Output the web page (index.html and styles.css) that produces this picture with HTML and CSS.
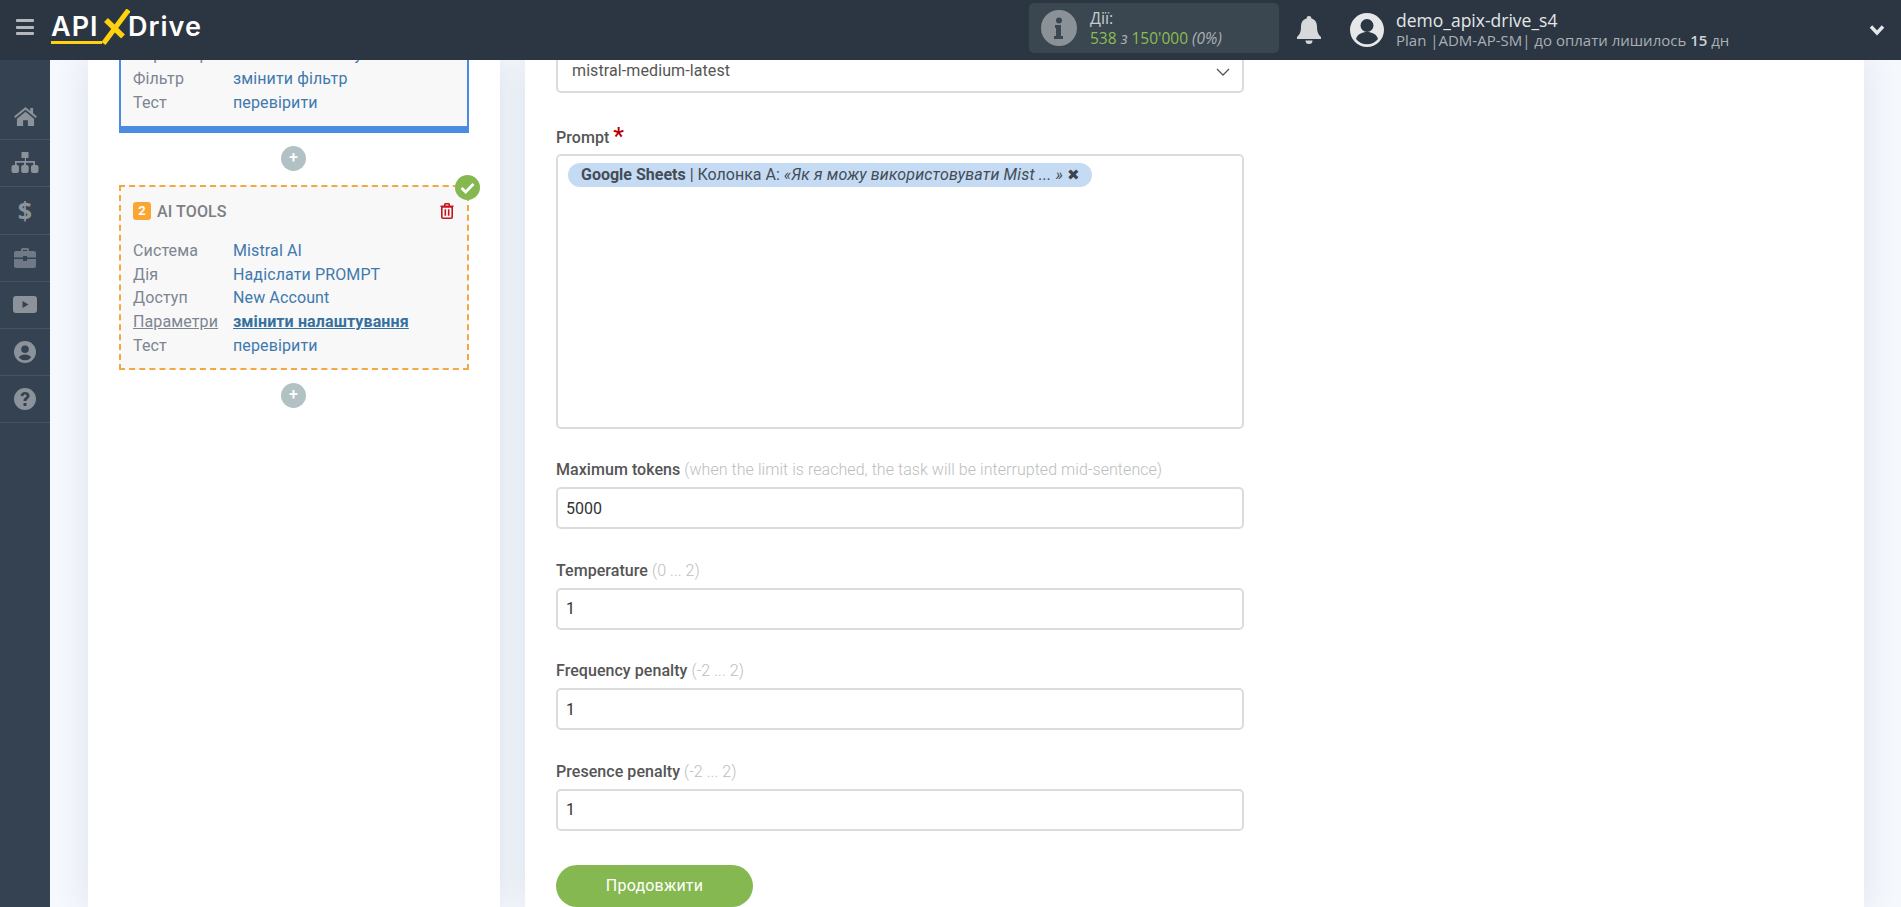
FILE: index.html
```html
<!DOCTYPE html>
<html lang="uk">
<head>
<meta charset="utf-8">
<title>ApiX-Drive</title>
<link rel="stylesheet" href="styles.css">
</head>
<body>
<header class="topbar">
  <div class="burger"><i></i><i></i><i></i></div>
  <div class="logo">
    <span class="logo-api">API</span>
    <svg class="logo-x" viewBox="0 0 28 36" width="28" height="36"><path d="M26.500 1 1.500 34.500" stroke="#ffd10f" stroke-width="5" fill="none"/><path d="M4 11 21 27.500" stroke="#ffd10f" stroke-width="5.500" fill="none"/></svg>
    <span class="logo-drive">Drive</span>
  </div>
  <div class="top-right">
    <div class="quota">
      <svg class="quota-icon" viewBox="0 0 36 36" width="36" height="36"><circle cx="18" cy="18" r="18" fill="#8b9297"/><circle cx="18" cy="10.500" r="3" fill="#3a4751"/><path d="M14 15h6v11h2v3h-9v-3h2v-8h-1z" fill="#3a4751"/></svg>
      <div class="quota-text">
        <div class="quota-title">Дії:</div>
        <div class="quota-val"><span class="green">538</span> <em>з</em> <span class="green">150'000</span> <em>(0%)</em></div>
      </div>
    </div>
    <svg class="bell" viewBox="0 0 24 28" width="24" height="28"><path d="M12 0a2.400 2.400 0 0 1 2.400 2.600C18.500 3.700 20 7 20 11c0 6 2 8 4 10v2H0v-2c2-2 4-4 4-10 0-4 1.500-7.300 5.600-8.400A2.400 2.400 0 0 1 12 0z" fill="#d6d8da"/><path d="M8.500 24.500h7a3.500 3.500 0 0 1-7 0z" fill="#d6d8da"/></svg>
    <svg class="avatar" viewBox="0 0 34 34" width="34" height="34"><circle cx="17" cy="17" r="17" fill="#e6e7e8"/><circle cx="17" cy="12.500" r="6.500" fill="#2b3643"/><path d="M6 26c1.500-5 6-7 11-7s9.500 2 11 7a14 14 0 0 1-22 0z" fill="#2b3643"/></svg>
    <div class="user">
      <div class="user-name">demo_apix-drive_s4</div>
      <div class="user-plan">Plan |ADM-AP-SM| до оплати лишилось <b>15</b> дн</div>
    </div>
    <svg class="top-chev" viewBox="0 0 16 12" width="16" height="12"><path d="M2 2.500 8 9l6-6.500" stroke="#e6e7e8" stroke-width="3.400" fill="none"/></svg>
  </div>
</header>
<div class="body">
  <nav class="sidebar">
    <a class="nav-item"><svg viewBox="0 0 26 22" width="25" height="21"><path d="M13 1 1 11l1.300 1.700L13 4l10.700 8.700L25 11l-4-3.300V2h-3v3.200z"/><path d="M13 6 4 13.300V21h6.500v-6h5v6H22v-7.700z"/></svg></a>
    <a class="nav-item"><svg viewBox="0 0 28 22" width="28" height="22"><path d="M10.500 0h7v6h-2.500v3H24v4h-1.700v-2.300H15V13h-2v-2.300H5.700V13H4V9h9.900V6h-3.400z"/><rect x="0.500" y="13" width="7.500" height="8" rx="2"/><rect x="10.200" y="13" width="7.500" height="8" rx="2"/><rect x="20" y="13" width="7.500" height="8" rx="2"/></svg></a>
    <a class="nav-item"><span class="dollar">$</span></a>
    <a class="nav-item"><svg class="dim" viewBox="0 0 22 20" width="22" height="20"><path d="M7 3V1.500A1.500 1.500 0 0 1 8.500 0h5A1.500 1.500 0 0 1 15 1.500V3h5a2 2 0 0 1 2 2v4.500H13V8H9v1.500H0V5a2 2 0 0 1 2-2zm2 0h4V2H9z"/><path d="M0 11h9v2h4v-2h9v7a2 2 0 0 1-2 2H2a2 2 0 0 1-2-2z"/></svg></a>
    <a class="nav-item"><svg viewBox="0 0 24 17" width="24" height="17"><path fill-rule="evenodd" d="M3 0h18a3 3 0 0 1 3 3v11a3 3 0 0 1-3 3H3a3 3 0 0 1-3-3V3a3 3 0 0 1 3-3zm6.500 5v7l6-3.500z"/></svg></a>
    <a class="nav-item"><svg viewBox="0 0 22 22" width="22" height="22"><path fill-rule="evenodd" d="M11 0a11 11 0 1 1 0 22 11 11 0 0 1 0-22zm0 4.500a3.800 3.800 0 1 0 0 7.600 3.800 3.800 0 0 0 0-7.600zm0 9c-2.800 0-5.200 1-6.200 3a8.200 8.200 0 0 0 12.400 0c-1-2-3.400-3-6.200-3z"/></svg></a>
    <a class="nav-item"><svg viewBox="0 0 22 22" width="22" height="22"><path fill-rule="evenodd" d="M11 0a11 11 0 1 1 0 22 11 11 0 0 1 0-22zm-1.500 15v3h3v-3zM11 4C8.500 4 6.800 5.300 6.500 7.800l2.800.4C9.500 7 10 6.500 11 6.500s1.600.5 1.600 1.300c0 .7-.5 1.100-1.300 1.700-1.200.9-1.800 1.600-1.800 3.500h3c0-1 .3-1.400 1.200-2 1.200-.9 1.900-1.800 1.900-3.300C15.600 5.400 13.700 4 11 4z"/></svg></a>
  </nav>
  <main class="main">
    <section class="panel panel-left">
      <div class="block block-blue">
        <div class="row row-clipped"><span class="key">Параметри</span><span class="val">змінити налаштування</span></div>
        <div class="row"><span class="key">Фільтр</span><span class="val">змінити фільтр</span></div>
        <div class="row"><span class="key">Тест</span><span class="val">перевірити</span></div>
      </div>
      <div class="plus">+</div>
      <div class="block block-dashed">
        <div class="check"><svg viewBox="0 0 14 11" width="15" height="12"><path d="M1.500 5.500 5.300 9.200 12.500 1.800" stroke="#fff" stroke-width="2.600" fill="none"/></svg></div>
        <div class="block-head">
          <span class="num">2</span><span class="block-title">AI TOOLS</span>
          <svg class="trash" viewBox="0 0 14 16" width="14" height="16"><path fill="none" stroke="#c8141c" stroke-width="1.600" d="M1.800 4h10.400v10a1.200 1.200 0 0 1-1.200 1.200H3A1.200 1.200 0 0 1 1.800 14zM.5 3.300h13M4.800 3V1.400A.7.700 0 0 1 5.500.8h3a.7.700 0 0 1 .7.600V3M5.300 6.200v6.500M8.700 6.200v6.500"/></svg>
        </div>
        <div class="row"><span class="key">Система</span><span class="val">Mistral AI</span></div>
        <div class="row"><span class="key">Дія</span><span class="val">Надіслати PROMPT</span></div>
        <div class="row"><span class="key">Доступ</span><span class="val">New Account</span></div>
        <div class="row"><span class="key key-u">Параметри</span><span class="val val-b">змінити налаштування</span></div>
        <div class="row"><span class="key">Тест</span><span class="val">перевірити</span></div>
      </div>
      <div class="plus">+</div>
    </section>
    <section class="panel panel-right">
      <div class="select">
        <span>mistral-medium-latest</span>
        <svg viewBox="0 0 14 8" width="14" height="8"><path d="M1 1l6 6 6-6" stroke="#555" stroke-width="1.300" fill="none"/></svg>
      </div>
      <div class="field field-prompt">
        <label class="label">Prompt <span class="star">*</span></label>
        <div class="textarea">
          <span class="chip"><b>Google Sheets</b> | Колонка А: <i>«Як я можу використовувати Mist ... »</i> <span class="chip-x">✖</span></span>
        </div>
      </div>
      <div class="field field-first">
        <label class="label">Maximum tokens <span class="hint">(when the limit is reached, the task will be interrupted mid-sentence)</span></label>
        <input class="input" value="5000">
      </div>
      <div class="field">
        <label class="label">Temperature <span class="hint">(0 ... 2)</span></label>
        <input class="input" value="1">
      </div>
      <div class="field">
        <label class="label">Frequency penalty <span class="hint">(-2 ... 2)</span></label>
        <input class="input" value="1">
      </div>
      <div class="field">
        <label class="label">Presence penalty <span class="hint">(-2 ... 2)</span></label>
        <input class="input" value="1">
      </div>
      <button class="btn">Продовжити</button>
    </section>
  </main>
</div>
</body>
</html>
```
FILE: styles.css
```css
* { box-sizing: border-box; }
html, body { margin: 0; height: 100%; overflow: hidden; }
body { font-family: Roboto, "Liberation Sans", sans-serif; font-size: 16px; color: #444; background: #f5f8fd; display: flex; flex-direction: column; height: 907px; }

.topbar { height: 60px; flex: none; background: #2b3642; display: flex; align-items: center; position: relative; z-index: 2; }
.burger { margin: 0 0 6px 16px; width: 18px; display: flex; flex-direction: column; gap: 3.500px; }
.burger i { display: block; height: 3px; background: #b4b8bc; border-radius: 1px; }
.logo { margin-left: 17px; display: flex; align-items: center; height: 60px; font-family: Inter, "Open Sans", sans-serif; font-weight: 600; font-size: 27px; color: #fff; letter-spacing: 1px; }
.logo-api { position: relative; width: 51px; margin-bottom: 6px; line-height: 26px; }
.logo-api::after { content: ""; position: absolute; left: 0; right: 0; top: 27px; height: 3px; background: #ffd10f; }
.logo-x { flex: none; margin: 0 -2px 6px 0; }
.logo-drive { margin-bottom: 6px; line-height: 26px; }
.top-right { margin-left: auto; display: flex; align-items: center; font-family: "Open Sans", sans-serif; }
.quota { width: 250px; height: 50px; background: #3a4751; border-radius: 5px; display: flex; align-items: center; padding-left: 12px; margin-top: -4px; }
.quota-icon { flex: none; }
.quota-text { margin-left: 13px; line-height: 20px; font-size: 15.500px; color: #c8ccd0; }
.quota-title { font-size: 16px; }
.quota-val { color: #aab0b5; }
.quota-val em { font-style: italic; }
.green { color: #8dbb52; }
.bell { margin-left: 18px; }
.avatar { margin-left: 29px; }
.user { margin-left: 12px; width: 473px; line-height: 20px; }
.user-name { font-size: 17.500px; color: #e4e6e8; }
.user-plan { font-size: 15px; color: #aab0b5; }
.user-plan b { color: #cfd2d5; font-weight: 600; }
.top-chev { margin-right: 16px; }

.body { flex: 1; display: flex; min-height: 0; overflow: hidden; }
.sidebar { width: 50px; flex: none; background: #354252; padding-top: 33px; }
.nav-item { height: 47.200px; border-bottom: 1px solid #465362; display: flex; align-items: center; justify-content: center; }
.nav-item svg { fill: #8b9299; }
.nav-item svg.dim { fill: #6f7a86; }
.dollar { font-family: "Open Sans", sans-serif; font-weight: 700; font-size: 25px; color: #8b9299; line-height: 1; }

.main { flex: 1; display: flex; gap: 25px; padding: 0 37px 0 38px; min-width: 0; }
.panel { background: #fff; box-shadow: 0 0 30px rgba(70, 90, 130, .14); flex: none; }
.panel-left { width: 412px; padding: 0 31px; }
.panel-right { flex: 1; padding: 0 31px; }

.block { width: 350px; background: #f8f8f8; position: relative; letter-spacing: .12px; }
.block-blue { display: flow-root; height: 73px; border: solid #4a8ce0; border-width: 0 2px 7px; padding-left: 12px; }
.block-blue .row { height: 24px; line-height: 24px; }
.block-dashed { height: 185px; margin-bottom: 3px; border: 2px dashed #f2a940; padding: 12px 0 0 12px; }
.row { display: flex; height: 23.700px; line-height: 23.700px; }
.block-blue .row-clipped { margin-top: -17px; }
.key { width: 100px; color: #7c8591; flex: none; }
.key-u { text-decoration: underline; }
.val { color: #3f79ae; }
.val-b { font-weight: 700; text-decoration: underline; color: #36709f; }

.plus { width: 25px; height: 25px; border-radius: 50%; background: #b2c2c4; color: #fff; font-size: 16px; line-height: 24px; text-align: center; margin: 13px 0 14px 162px; font-weight: 500; }

.check { position: absolute; right: -13px; top: -12px; width: 25px; height: 25px; border-radius: 50%; background: #86b851; display: flex; align-items: center; justify-content: center; }
.block-head { display: flex; align-items: center; height: 24px; margin-bottom: 16px; }
.num { width: 18px; height: 18px; background: #fba632; color: #fff; border-radius: 3px; font-size: 13px; font-weight: 700; text-align: center; line-height: 18px; }
.block-title { margin-left: 6px; font-weight: 500; color: #7c7f84; font-size: 16px; }
.trash { margin-left: auto; margin-right: 13px; }

.select { width: 688px; height: 51px; margin-top: -18px; border: 2px solid #dcdcdc; border-radius: 5px; background: #fff; display: flex; align-items: center; justify-content: space-between; padding: 5px 12px 0 14px; color: #555; letter-spacing: .1px; }
.select svg { margin-top: 3px; }
.field { width: 688px; margin-top: 30.500px; }
.field-prompt { margin-top: 34px; }
.field-first { margin-top: 30px; }
.label { display: block; height: 20px; padding-top: 1px; line-height: 20px; margin-bottom: 8px; font-weight: 500; color: #555; letter-spacing: .05px; }
.field-prompt .label { margin-bottom: 7px; }
.star { color: #b30000; font-size: 24px; line-height: 16px; vertical-align: -1px; }
.hint { font-weight: 300; color: #bdbdbd; }
.textarea { height: 275px; border: 2px solid #dcdcdc; border-radius: 5px; padding: 7px 10px; }
.chip { display: block; height: 24px; width: 524px; padding: 0 13px; background: #c5dbf3; border-radius: 12px; line-height: 24px; color: #444c56; white-space: pre; }
.chip b { font-weight: 700; }
.chip i { letter-spacing: .15px; }
.chip-x { font-size: 15px; color: #3c4450; }
.input { display: block; width: 688px; height: 42px; border: 2px solid #dcdcdc; border-radius: 5px; padding: 0 8px; background: #fff; font: 400 16px Roboto, sans-serif; color: #333; outline: none; }
.btn { display: block; margin-top: 34px; width: 197px; height: 42px; border: 0; border-radius: 21px; background: #86b851; color: #fff; font: 400 16px Roboto, sans-serif; letter-spacing: .2px; }
```
